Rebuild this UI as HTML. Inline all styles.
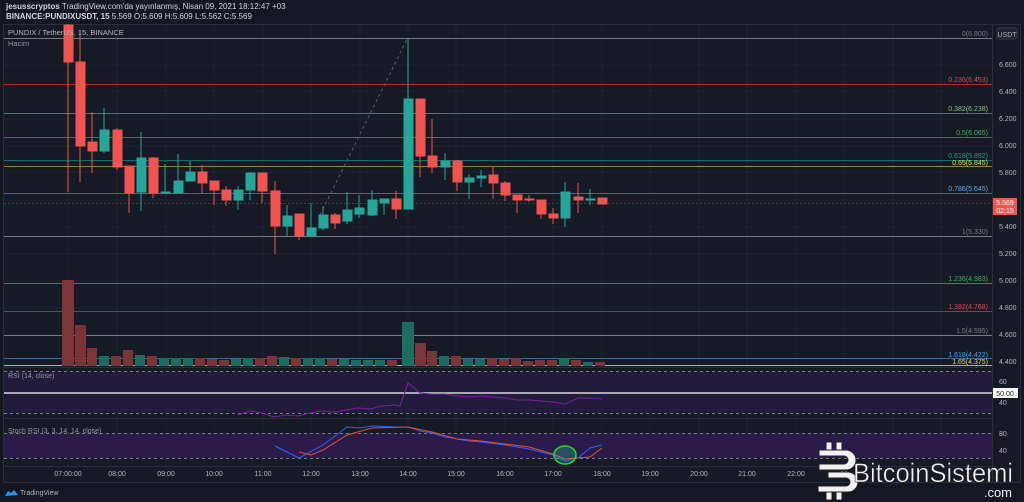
<!DOCTYPE html>
<html><head><meta charset="utf-8"><style>
html,body{margin:0;padding:0;background:#131722;width:1024px;height:502px;overflow:hidden;font-family:"Liberation Sans",sans-serif}
svg{position:absolute;left:0;top:0}
</style></head><body>
<svg width="1024" height="502" viewBox="0 0 1024 502" xmlns="http://www.w3.org/2000/svg" font-family="Liberation Sans, sans-serif">
<rect width="1024" height="502" fill="#131722"/>
<text x="6" y="9" font-size="8" fill="#d1d4dc"><tspan font-weight="bold">jesusscryptos</tspan> TradingView.com'da yayınlanmış, Nisan 09, 2021 18:12:47 +03</text>
<text x="6" y="19" font-size="8" fill="#d1d4dc"><tspan font-weight="bold">BINANCE:PUNDIXUSDT, 15</tspan> 5.569 O:5.609 H:5.609 L:5.562 C:5.569</text>
<rect x="3.5" y="24.5" width="1017" height="458" fill="#161a25" stroke="#2a2e39"/>
<g stroke="#1f2330" stroke-width="1">
<line x1="68" y1="25" x2="68" y2="466"/><line x1="117" y1="25" x2="117" y2="466"/><line x1="166" y1="25" x2="166" y2="466"/><line x1="214" y1="25" x2="214" y2="466"/><line x1="263" y1="25" x2="263" y2="466"/><line x1="311" y1="25" x2="311" y2="466"/><line x1="360" y1="25" x2="360" y2="466"/><line x1="408" y1="25" x2="408" y2="466"/><line x1="456" y1="25" x2="456" y2="466"/><line x1="505" y1="25" x2="505" y2="466"/><line x1="553" y1="25" x2="553" y2="466"/><line x1="602" y1="25" x2="602" y2="466"/><line x1="650" y1="25" x2="650" y2="466"/><line x1="699" y1="25" x2="699" y2="466"/><line x1="747" y1="25" x2="747" y2="466"/><line x1="796" y1="25" x2="796" y2="466"/><line x1="844" y1="25" x2="844" y2="466"/><line x1="893" y1="25" x2="893" y2="466"/><line x1="941" y1="25" x2="941" y2="466"/>
<line x1="4" y1="65" x2="992" y2="65"/><line x1="4" y1="91" x2="992" y2="91"/><line x1="4" y1="119" x2="992" y2="119"/><line x1="4" y1="146" x2="992" y2="146"/><line x1="4" y1="172" x2="992" y2="172"/><line x1="4" y1="200" x2="992" y2="200"/><line x1="4" y1="227" x2="992" y2="227"/><line x1="4" y1="254" x2="992" y2="254"/><line x1="4" y1="281" x2="992" y2="281"/><line x1="4" y1="308" x2="992" y2="308"/><line x1="4" y1="335" x2="992" y2="335"/>
</g>
<g stroke-width="1">
<line x1="4" y1="38.5" x2="992" y2="38.5" stroke="#787b86"/>
<line x1="4" y1="84.5" x2="992" y2="84.5" stroke="#b22833"/>
<line x1="4" y1="113.5" x2="992" y2="113.5" stroke="#58765a"/>
<line x1="4" y1="137.5" x2="992" y2="137.5" stroke="#3b7a3f"/>
<line x1="4" y1="160.5" x2="992" y2="160.5" stroke="#0f6c66"/>
<line x1="4" y1="166.5" x2="992" y2="166.5" stroke="#8b8530"/>
<line x1="4" y1="193.5" x2="992" y2="193.5" stroke="#3f6a92"/>
<line x1="4" y1="236.5" x2="992" y2="236.5" stroke="#787b86"/>
<line x1="4" y1="283.5" x2="992" y2="283.5" stroke="#3b8a3f"/>
<line x1="4" y1="311.5" x2="992" y2="311.5" stroke="#b22833"/>
<line x1="4" y1="335.5" x2="992" y2="335.5" stroke="#787b86"/>
<line x1="4" y1="358.5" x2="992" y2="358.5" stroke="#3f6a92"/>
<line x1="4" y1="365.5" x2="992" y2="365.5" stroke="#c9b93a"/>
<line x1="4" y1="203.5" x2="992" y2="203.5" stroke="#7a2a30" stroke-dasharray="2,2"/>
<line x1="320" y1="215" x2="407" y2="39" stroke="#5d606b" stroke-dasharray="3,3"/>
</g>
<g font-size="7" text-anchor="end">
<text x="988" y="36" fill="#787b86">0(6.800)</text>
<text x="988" y="82" fill="#e0454e">0.236(6.453)</text>
<text x="988" y="111" fill="#8fbf7f">0.382(6.238)</text>
<text x="988" y="135" fill="#4caf50">0.5(6.065)</text>
<text x="988" y="158" fill="#1a9a8e">0.618(5.892)</text>
<text x="988" y="165" fill="#e8de43">0.65(5.845)</text>
<text x="988" y="191" fill="#64a8e8">0.786(5.645)</text>
<text x="988" y="234" fill="#787b86">1(5.330)</text>
<text x="988" y="281" fill="#4caf50">1.236(4.983)</text>
<text x="988" y="309" fill="#e0454e">1.382(4.768)</text>
<text x="988" y="333" fill="#787b86">1.5(4.595)</text>
<text x="988" y="357" fill="#42a5f5">1.618(4.422)</text>
<text x="988" y="364" fill="#e8de43">1.65(4.375)</text>
</g>
<g>
<rect x="62" y="280" width="12" height="86" fill="#7b3538"/>
<rect x="75" y="325" width="11" height="41" fill="#7b3538"/>
<rect x="87" y="348" width="10" height="18" fill="#7b3538"/>
<rect x="99" y="356" width="10" height="10" fill="#1e6b62"/>
<rect x="111" y="356" width="10" height="10" fill="#7b3538"/>
<rect x="123" y="350" width="10" height="16" fill="#7b3538"/>
<rect x="135" y="355" width="10" height="11" fill="#1e6b62"/>
<rect x="147" y="356" width="10" height="10" fill="#7b3538"/>
<rect x="159" y="358" width="10" height="8" fill="#1e6b62"/>
<rect x="171" y="358" width="10" height="8" fill="#1e6b62"/>
<rect x="183" y="358" width="10" height="8" fill="#1e6b62"/>
<rect x="195" y="358" width="10" height="8" fill="#7b3538"/>
<rect x="207" y="359" width="10" height="7" fill="#7b3538"/>
<rect x="219" y="360" width="10" height="6" fill="#7b3538"/>
<rect x="231" y="359" width="10" height="7" fill="#1e6b62"/>
<rect x="243" y="358" width="10" height="8" fill="#1e6b62"/>
<rect x="255" y="358" width="10" height="8" fill="#7b3538"/>
<rect x="267" y="356" width="10" height="10" fill="#7b3538"/>
<rect x="279" y="357" width="10" height="9" fill="#1e6b62"/>
<rect x="291" y="358" width="10" height="8" fill="#7b3538"/>
<rect x="303" y="358" width="10" height="8" fill="#1e6b62"/>
<rect x="315" y="358" width="10" height="8" fill="#1e6b62"/>
<rect x="327" y="359" width="10" height="7" fill="#7b3538"/>
<rect x="339" y="359" width="10" height="7" fill="#1e6b62"/>
<rect x="351" y="360" width="10" height="6" fill="#1e6b62"/>
<rect x="363" y="360" width="10" height="6" fill="#1e6b62"/>
<rect x="375" y="360" width="10" height="6" fill="#1e6b62"/>
<rect x="387" y="360" width="10" height="6" fill="#7b3538"/>
<rect x="402" y="322" width="12" height="44" fill="#1e6b62"/>
<rect x="415" y="343" width="11" height="23" fill="#7b3538"/>
<rect x="427" y="351" width="10" height="15" fill="#7b3538"/>
<rect x="439" y="356" width="10" height="10" fill="#1e6b62"/>
<rect x="451" y="356" width="10" height="10" fill="#7b3538"/>
<rect x="463" y="359" width="10" height="7" fill="#1e6b62"/>
<rect x="475" y="359" width="10" height="7" fill="#1e6b62"/>
<rect x="487" y="358" width="10" height="8" fill="#7b3538"/>
<rect x="499" y="359" width="10" height="7" fill="#7b3538"/>
<rect x="511" y="358" width="10" height="8" fill="#7b3538"/>
<rect x="523" y="361" width="10" height="5" fill="#7b3538"/>
<rect x="535" y="360" width="10" height="6" fill="#7b3538"/>
<rect x="547" y="360" width="10" height="6" fill="#7b3538"/>
<rect x="559" y="358" width="10" height="8" fill="#1e6b62"/>
<rect x="571" y="360" width="10" height="6" fill="#7b3538"/>
<rect x="583" y="362" width="10" height="4" fill="#1e6b62"/>
<rect x="595" y="362" width="10" height="4" fill="#7b3538"/>
</g>
<g stroke-width="1">
<g stroke="#f05350" fill="#f05350">
<line x1="68" y1="24" x2="68" y2="192"/><rect x="64" y="25" width="9" height="37"/>
<line x1="80" y1="30" x2="80" y2="182"/><rect x="76" y="62" width="9" height="84"/>
<line x1="92" y1="112" x2="92" y2="173"/><rect x="88" y="142" width="9" height="9"/>
<line x1="117" y1="128" x2="117" y2="170"/><rect x="113" y="130" width="9" height="37"/>
<line x1="129" y1="166" x2="129" y2="213"/><rect x="125" y="166" width="9" height="27"/>
<line x1="153" y1="157" x2="153" y2="198"/><rect x="149" y="158" width="9" height="35"/>
<line x1="202" y1="165" x2="202" y2="193"/><rect x="198" y="172" width="9" height="11"/>
<line x1="214" y1="181" x2="214" y2="205"/><rect x="210" y="181" width="9" height="9"/>
<line x1="226" y1="186" x2="226" y2="206"/><rect x="222" y="190" width="9" height="10"/>
<line x1="262" y1="173" x2="262" y2="203"/><rect x="258" y="173" width="9" height="18"/>
<line x1="275" y1="181" x2="275" y2="254"/><rect x="271" y="191" width="9" height="35"/>
<line x1="299" y1="214" x2="299" y2="240"/><rect x="295" y="214" width="9" height="22"/>
<line x1="335" y1="213" x2="335" y2="229"/><rect x="331" y="215" width="9" height="8"/>
<line x1="396" y1="191" x2="396" y2="219"/><rect x="392" y="199" width="9" height="10"/>
<line x1="420" y1="99" x2="420" y2="177"/><rect x="416" y="99" width="9" height="57"/>
<line x1="432" y1="119" x2="432" y2="173"/><rect x="428" y="156" width="9" height="11"/>
<line x1="457" y1="160" x2="457" y2="191"/><rect x="453" y="161" width="9" height="21"/>
<line x1="493" y1="166" x2="493" y2="199"/><rect x="489" y="175" width="9" height="8"/>
<line x1="505" y1="181" x2="505" y2="201"/><rect x="501" y="183" width="9" height="12"/>
<line x1="517" y1="195" x2="517" y2="213"/><rect x="513" y="195" width="9" height="5"/>
<line x1="529" y1="195" x2="529" y2="202"/><rect x="525" y="199" width="9" height="1"/>
<line x1="541" y1="200" x2="541" y2="219"/><rect x="537" y="200" width="9" height="14"/>
<line x1="553" y1="208" x2="553" y2="224"/><rect x="549" y="214" width="9" height="4"/>
<line x1="578" y1="183" x2="578" y2="213"/><rect x="574" y="197" width="9" height="3"/>
<rect x="598" y="198" width="9" height="6"/>
</g>
<g stroke="#26a69a" fill="#26a69a">
<line x1="104" y1="108" x2="104" y2="153"/><rect x="100" y="130" width="9" height="21"/>
<line x1="141" y1="132" x2="141" y2="211"/><rect x="137" y="158" width="9" height="34"/>
<line x1="165" y1="164" x2="165" y2="193"/><rect x="161" y="192" width="9" height="1"/>
<line x1="178" y1="154" x2="178" y2="193"/><rect x="174" y="181" width="9" height="12"/>
<line x1="190" y1="161" x2="190" y2="181"/><rect x="186" y="172" width="9" height="9"/>
<line x1="238" y1="186" x2="238" y2="210"/><rect x="234" y="190" width="9" height="10"/>
<line x1="250" y1="173" x2="250" y2="200"/><rect x="246" y="173" width="9" height="17"/>
<line x1="287" y1="205" x2="287" y2="236"/><rect x="283" y="216" width="9" height="10"/>
<line x1="311" y1="203" x2="311" y2="236"/><rect x="307" y="228" width="9" height="8"/>
<line x1="323" y1="206" x2="323" y2="230"/><rect x="319" y="215" width="9" height="13"/>
<line x1="347" y1="192" x2="347" y2="224"/><rect x="343" y="210" width="9" height="11"/>
<line x1="359" y1="195" x2="359" y2="218"/><rect x="355" y="208" width="9" height="6"/>
<line x1="372" y1="190" x2="372" y2="216"/><rect x="368" y="200" width="9" height="15"/>
<line x1="384" y1="199" x2="384" y2="215"/><rect x="380" y="199" width="9" height="4"/>
<line x1="408" y1="38" x2="408" y2="209"/><rect x="404" y="99" width="9" height="110"/>
<line x1="445" y1="153" x2="445" y2="180"/><rect x="441" y="161" width="9" height="6"/>
<line x1="469" y1="174" x2="469" y2="199"/><rect x="465" y="178" width="9" height="4"/>
<line x1="481" y1="170" x2="481" y2="187"/><rect x="477" y="176" width="9" height="2"/>
<line x1="565" y1="182" x2="565" y2="227"/><rect x="561" y="192" width="9" height="26"/>
<line x1="590" y1="189" x2="590" y2="205"/><rect x="586" y="199" width="9" height="1"/>
</g>
</g>
<text x="8" y="35" font-size="7.5" fill="#b2b5be">PUNDIX / TetherUS, 15, BINANCE</text>
<text x="8" y="46" font-size="7.5" fill="#9598a1">Hacim</text>
<line x1="4" y1="367.5" x2="992" y2="367.5" stroke="#2a2e39"/>
<rect x="4" y="371" width="988" height="42" fill="#231b3b"/>
<line x1="4" y1="371.5" x2="992" y2="371.5" stroke="#787b86" stroke-dasharray="3,3"/>
<line x1="4" y1="413.5" x2="992" y2="413.5" stroke="#787b86" stroke-dasharray="3,3"/>
<line x1="4" y1="393" x2="992" y2="393" stroke="#d8d8dc" stroke-width="1.5"/>
<polyline fill="none" stroke="#7b1fa2" stroke-width="1" points="238,415 250,411 262,413 274,417 286,415 298,416 310,413 322,411 334,412 346,410 358,408 370,409 382,406 394,405 400,406 408,383 420,393 432,394 445,394 457,396 469,397 481,396 493,397 505,398 517,400 529,400 541,401 553,402 565,404 578,398 590,398 602,399"/>
<text x="8" y="378" font-size="7" fill="#9598a1">RSI (14, close)</text>
<line x1="4" y1="418.5" x2="992" y2="418.5" stroke="#2a2e39"/>
<rect x="4" y="433" width="988" height="25" fill="#2b1b4a"/>
<line x1="4" y1="433.5" x2="992" y2="433.5" stroke="#787b86" stroke-dasharray="3,3"/>
<line x1="4" y1="458.5" x2="992" y2="458.5" stroke="#787b86" stroke-dasharray="3,3"/>
<polyline fill="none" stroke="#2962ff" stroke-width="1" points="275,446 299,458 323,445 347,427 360,428 372,426 396,427 408,427 420,431 432,433 445,437 457,439 469,441 481,442 505,445 529,449 553,455 565,461 578,458 590,448 602,445"/>
<polyline fill="none" stroke="#e65123" stroke-width="1" points="299,452 311,455 323,450 347,435 372,428 408,427 432,432 457,439 481,441 505,444 529,447 553,454 565,459 590,457 602,448"/>
<ellipse cx="565" cy="455" rx="11" ry="9" fill="rgba(38,166,154,0.35)" stroke="#22dd22" stroke-width="1.5"/>
<text x="8" y="433" font-size="7" fill="#9598a1">Stoch RSI (3, 3, 14, 14, close)</text>
<line x1="992.5" y1="25" x2="992.5" y2="482" stroke="#2a2e39"/>
<rect x="997" y="28" width="20" height="11" rx="2" fill="#1e222d" stroke="#363a45"/>
<text x="1007" y="37" font-size="7" fill="#b2b5be" text-anchor="middle">USDT</text>
<g font-size="7" fill="#b2b5be">
<text x="999" y="67">6.600</text><text x="999" y="94">6.400</text><text x="999" y="121">6.200</text><text x="999" y="148">6.000</text><text x="999" y="175">5.800</text><text x="999" y="229">5.400</text><text x="999" y="256">5.200</text><text x="999" y="283">5.000</text><text x="999" y="310">4.800</text><text x="999" y="337">4.600</text><text x="999" y="364">4.400</text>
<text x="999" y="384">60</text><text x="999" y="405">40</text><text x="999" y="436">80</text><text x="999" y="453">40</text>
</g>
<rect x="993" y="198" width="24" height="17" fill="#f05350"/>
<text x="1005" y="205" font-size="7" fill="#fff" text-anchor="middle">5.569</text>
<text x="1005" y="213" font-size="7" fill="#fff" text-anchor="middle">02:15</text>
<rect x="993" y="388" width="25" height="10" fill="#fff"/>
<text x="1005" y="396" font-size="7" fill="#131722" text-anchor="middle">50.00</text>
<line x1="4" y1="466.5" x2="992" y2="466.5" stroke="#2a2e39"/>
<g font-size="7" fill="#b2b5be" text-anchor="middle">
<text x="68" y="476">07:00:00</text><text x="117" y="476">08:00</text><text x="166" y="476">09:00</text><text x="214" y="476">10:00</text><text x="263" y="476">11:00</text><text x="311" y="476">12:00</text><text x="360" y="476">13:00</text><text x="408" y="476">14:00</text><text x="456" y="476">15:00</text><text x="505" y="476">16:00</text><text x="553" y="476">17:00</text><text x="602" y="476">18:00</text><text x="650" y="476">19:00</text><text x="699" y="476">20:00</text><text x="747" y="476">21:00</text><text x="796" y="476">22:00</text><text x="844" y="476">23</text>
</g>
<path d="M5 496 l3 -5 l3 2 l3 -3 l4 5 z" fill="#2196f3"/>
<text x="20" y="495" font-size="7" fill="#b2b5be">TradingView</text>
<!-- watermark -->
<g fill="#f2f2f2" stroke="#222" stroke-width="1">
<rect x="826" y="442" width="6" height="8"/><rect x="836" y="442" width="6" height="8"/>
<rect x="826" y="492" width="6" height="8"/><rect x="836" y="492" width="6" height="8"/>
<path d="M819 450 h27 a10 10 0 0 1 0 20 h-27 v-6 h25 a4 4 0 0 0 0 -8 h-25 z"/>
<path d="M818 472 h30 a10 10 0 0 1 0 20 h-30 v-6 h28 a4 4 0 0 0 0 -8 h-18 v-6 z"/>
</g>
<text x="853" y="482" font-size="27" fill="#f2f2f2" stroke="#222" stroke-width="0.5" textLength="160" lengthAdjust="spacingAndGlyphs">BitcoinSistemi</text>
<text x="1012" y="497" font-size="13" fill="#f2f2f2" text-anchor="end">.com</text>
</svg>
</body></html>
